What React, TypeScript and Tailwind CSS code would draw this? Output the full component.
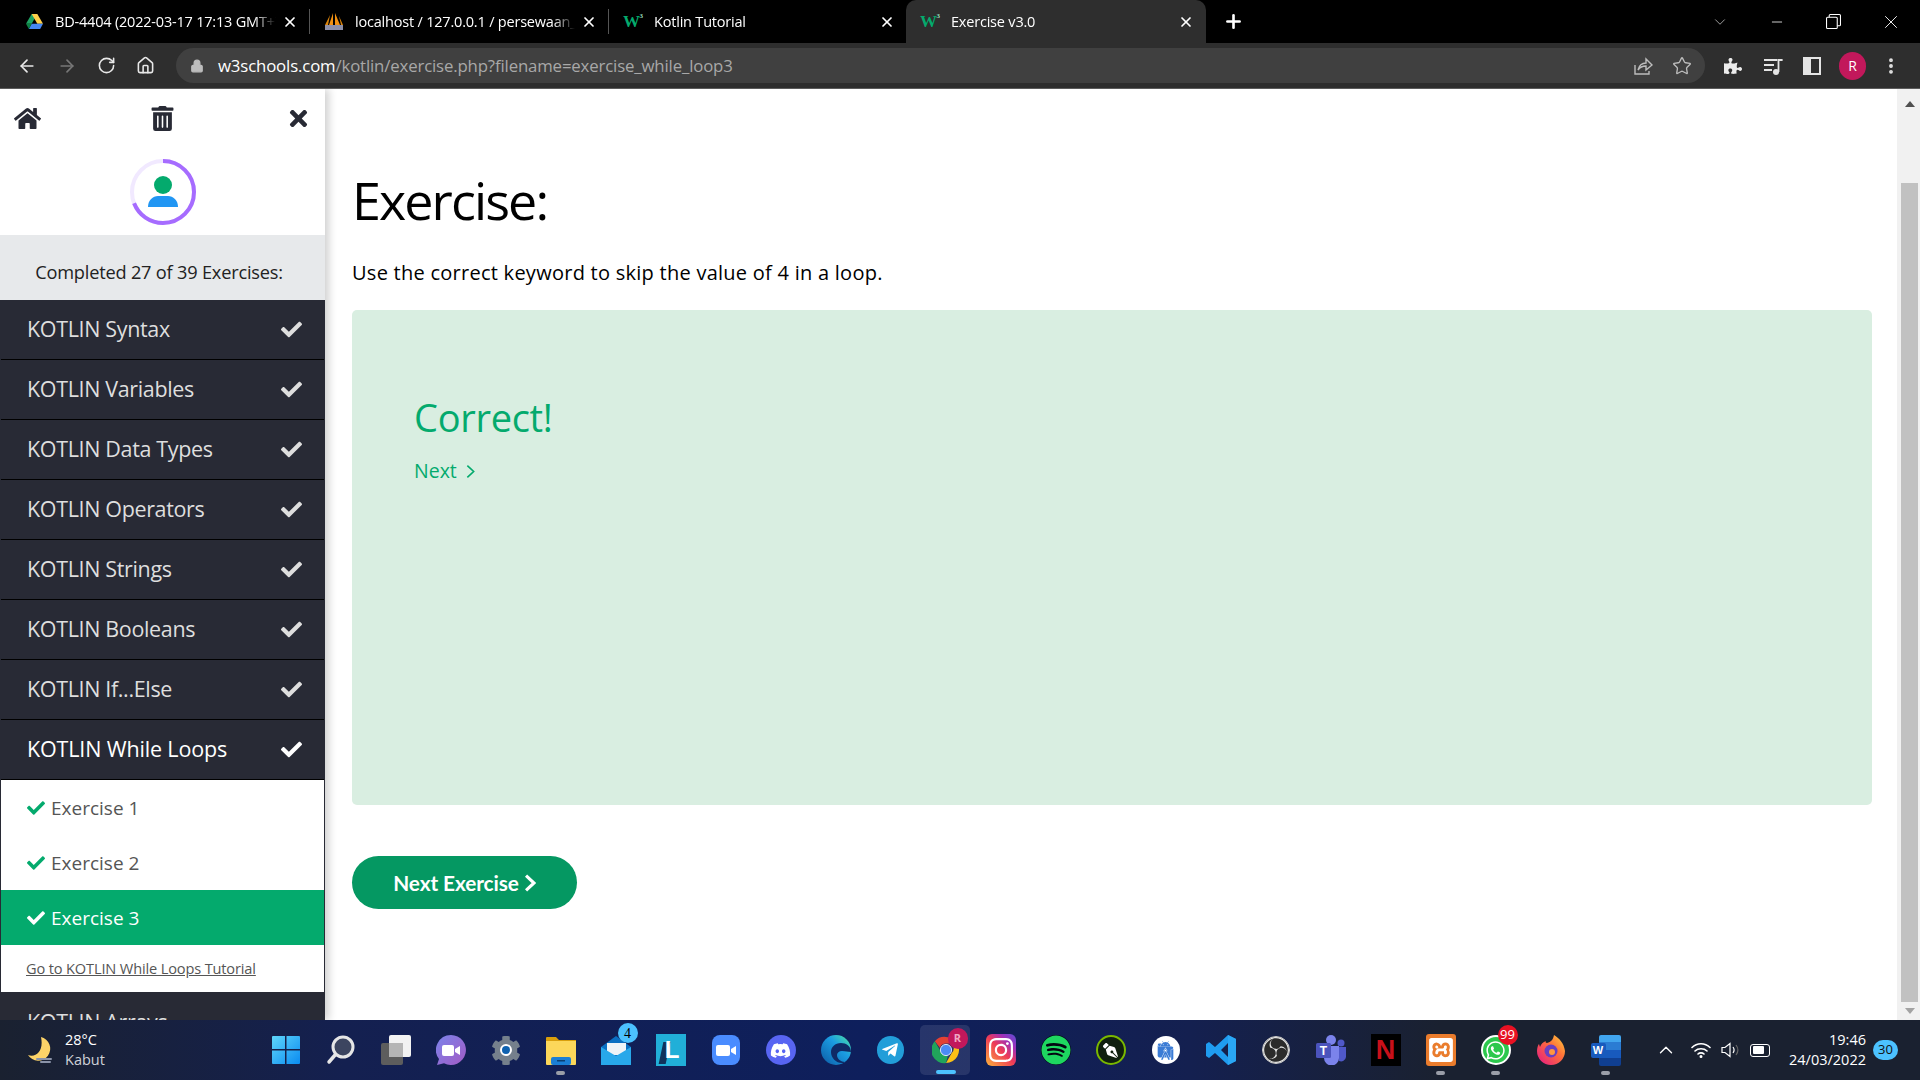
import { ArrowLeft, ArrowRight, ChevronDown, ChevronUp, Home, Lock, Minus, MoreVertical, Plus, RotateCw, Star, X } from "lucide-react";
import { FaCheck, FaCog, FaDiscord, FaHome, FaSpotify, FaTelegramPlane, FaTimes, FaTrashAlt, FaWhatsapp, FaPuzzlePiece, FaPenNib } from "react-icons/fa";
import { SiAndroidstudio, SiInstagram, SiObsstudio, SiXampp } from "react-icons/si";

const topics = ["KOTLIN Syntax", "KOTLIN Variables", "KOTLIN Data Types", "KOTLIN Operators", "KOTLIN Strings", "KOTLIN Booleans", "KOTLIN If...Else"];

function W3Icon() {
    return (
        <span className="relative w-[20px] h-5 flex items-center [font-family:'Liberation_Serif',serif] font-bold text-[17px] leading-none text-[#04aa6d]">
            W<span className="absolute right-0 top-[1px] text-[7px] text-[#9fe0c4]">3</span>
        </span>
    );
}

function Tab({ icon, title, width, active }: { icon: React.ReactNode; title: string; width: string; active?: boolean }) {
    return (
        <div className={`relative flex items-center h-full shrink-0 ${width} ${active ? "bg-[#2e2e2e] rounded-t-[10px] pl-[14px] pr-[12px]" : "pl-[14px] pr-[11px]"}`}>
            <div className="w-[20px] h-5 flex items-center justify-center shrink-0">{icon}</div>
            <div className={`flex-1 min-w-0 overflow-hidden whitespace-nowrap text-[14.5px] tracking-[-0.2px] text-white [mask-image:linear-gradient(to_left,transparent,black_22px)] ${active ? "ml-[11px]" : "ml-[11px]"}`}>{title}</div>
            <X size={16} strokeWidth={2.6} className="text-white shrink-0 ml-[6px]" />
        </div>
    );
}

function TabBar() {
    return (
        <div className="h-[43px] bg-black flex items-stretch shrink-0 pr-px">
            <div className="w-[10px]" />
            <Tab width="w-[299px]" title="BD-4404 (2022-03-17 17:13 GMT+7)" icon={
                <svg viewBox="0 0 20 18" className="w-[19px] h-[17px]">
                    <path d="M7 1h6l-6 10.5H1z" fill="#1fa463" />
                    <path d="M13 1l6 10.5h-6L7 1z" fill="#ffd04b" />
                    <path d="M4 17l3-5.5h12L16 17z" fill="#4688f4" />
                    <path d="M1 11.5h6L4 17z" fill="#0b8043" />
                </svg>
            } />
            <div className="w-px bg-[#555] my-[9px]" />
            <Tab width="w-[298px]" title="localhost / 127.0.0.1 / persewaan_mobil" icon={
                <svg viewBox="0 0 20 20" className="w-5 h-5">
                    <path d="M9 1L5 13h4zM11 1l5 12h-5z" fill="#f29111" />
                    <path d="M6 3L1 13h3zM15 4l4 9h-2z" fill="#d9830c" />
                    <rect x="1" y="13" width="18" height="5" fill="#8c8fa8" />
                </svg>
            } />
            <div className="w-px bg-[#555] my-[9px]" />
            <Tab width="w-[297px]" title="Kotlin Tutorial" icon={<W3Icon />} />
            <Tab active width="w-[300px]" title="Exercise v3.0" icon={<W3Icon />} />
            <div className="w-[55px] flex items-center justify-center">
                <Plus size={21} strokeWidth={3} className="text-white" />
            </div>
            <div className="flex-1" />
            <div className="w-[57px] flex items-center justify-center"><ChevronDown size={18} strokeWidth={1} className="text-[#ccc]" /></div>
            <div className="w-[57px] flex items-center justify-center"><Minus size={16} strokeWidth={1.2} className="text-white" /></div>
            <div className="w-[57px] flex items-center justify-center">
                <svg viewBox="0 0 14 14" className="w-[15px] h-[15px]" fill="none" stroke="white"><rect x="0.5" y="3" width="10" height="10.5" rx="1" /><path d="M3 3V1.5a1 1 0 0 1 1-1h8.5a1 1 0 0 1 1 1V10a1 1 0 0 1-1 1h-2" /></svg>
            </div>
            <div className="w-[57px] flex items-center justify-center"><X size={22} strokeWidth={1} className="text-white" /></div>
        </div>
    );
}

function Toolbar() {
    return (
        <div className="h-[46px] bg-[#2e2e2e] border-b border-[#5c5c5c] flex items-center shrink-0 text-white">
            <div className="w-[176px] pl-[17px] flex items-center gap-[20px] shrink-0">
                <ArrowLeft size={20} strokeWidth={2} className="text-[#e8e8e8]" />
                <ArrowRight size={20} strokeWidth={2} className="text-[#777]" />
                <RotateCw size={19} strokeWidth={2} className="text-[#e8e8e8]" />
                <Home size={19} strokeWidth={2} className="text-[#e8e8e8]" />
            </div>
            <div className="w-[1529px] h-[35px] rounded-full bg-[#404040] flex items-center shrink-0">
                <Lock size={14} fill="#bdbdbd" className="text-[#bdbdbd] ml-[14px]" />
                <div className="ml-[14px] text-[16.8px] tracking-[-0.15px] text-[#a8a8a8] whitespace-nowrap"><span className="text-white">w3schools.com</span>/kotlin/exercise.php?filename=exercise_while_loop3</div>
                <svg viewBox="0 0 20 20" className="w-5 h-5 ml-auto" fill="none" stroke="#bdbdbd" strokeWidth="1.4"><path d="M2 9v9h14v-3" /><path d="M5 14c1-4 4-7 8-7V3l6 6-6 5v-4c-3 0-6 1-8 4z" /></svg>
                <Star size={20} strokeWidth={1.6} className="text-[#bdbdbd] ml-[19px] mr-[13px]" />
            </div>
            <div className="flex-1 flex items-center pl-[19px]">
                <FaPuzzlePiece size={18} className="text-[#ececec]" />
                <svg viewBox="0 0 20 20" className="w-5 h-5 ml-[21px]" fill="#e4e4e4"><rect x="1" y="3" width="13" height="2" /><rect x="1" y="8" width="10" height="2" /><rect x="1" y="13" width="8" height="2" /><circle cx="13" cy="16" r="3" /><rect x="14.6" y="3" width="1.8" height="13" /><rect x="14.6" y="3" width="5" height="2" /></svg>
                <div className="w-[18px] h-[18px] bg-[#e4e4e4] ml-[20px] flex justify-end p-[2px] pl-[8px]"><div className="w-full h-full bg-[#2e2e2e]" /></div>
                <div className="w-[27px] h-[28px] rounded-full bg-[#c2185b] ml-[18px] flex items-center justify-center text-[14px] text-white">R</div>
                <MoreVertical size={20} strokeWidth={2.6} className="text-[#e4e4e4] ml-[15px]" />
            </div>
        </div>
    );
}

function Sidebar() {
    return (
        <div className="w-[325px] h-full shrink-0 bg-white flex flex-col overflow-hidden shadow-[4px_0_8px_rgba(0,0,0,0.18)] z-10">
            <div className="h-[58px] flex items-center justify-between pl-[14px] pr-[15px] shrink-0 text-[#282a35]">
                <FaHome size={27} />
                <FaTrashAlt size={25} className="-ml-px" />
                <FaTimes size={25} className="translate-x-px" />
            </div>
            <div className="h-[88px] pt-[11px] flex items-start justify-center shrink-0">
                <svg viewBox="0 0 68 68" className="w-[68px] h-[68px]">
                    <circle cx="34" cy="34" r="31" fill="none" stroke="#f1e9ff" strokeWidth="4" />
                    <circle cx="34" cy="34" r="31" fill="none" stroke="#a66cff" strokeWidth="4" strokeDasharray="134.4 194.8" transform="rotate(-90 34 34)" />
                    <circle cx="34" cy="27" r="9" fill="#04aa6d" />
                    <path d="M19 49c0-7 5-11 10-11h10c5 0 10 4 10 11z" fill="#2196f3" />
                </svg>
            </div>
            <div className="h-[65px] bg-[#e7e9eb] flex items-center justify-center text-[18.2px] tracking-[-0.2px] text-[#222] pt-[10px] pr-[7px] shrink-0">Completed 27 of 39 Exercises:</div>
            <div className="bg-[#282a35] flex-1 flex flex-col">
                {topics.map((t) => (
                    <div key={t} className="h-[60px] shrink-0 border-b border-black mx-px flex items-center justify-between pl-[26px] pr-[22px] text-[21.5px] tracking-[-0.35px] text-[#dedede]">
                        {t}
                        <FaCheck size={21} />
                    </div>
                ))}
                <div className="h-[60px] shrink-0 border-b border-black mx-px flex items-center justify-between pl-[26px] pr-[22px] text-[21.5px] tracking-[-0.15px] text-white">
                    KOTLIN While Loops
                    <FaCheck size={21} />
                </div>
                <div className="bg-white mx-px shrink-0 text-[#555] text-[19px]">
                    <div className="h-[55px] flex items-center pl-[26px] pt-px gap-[6px]"><FaCheck size={18} className="text-[#04aa6d]" />Exercise 1</div>
                    <div className="h-[55px] flex items-center pl-[26px] pt-px gap-[6px]"><FaCheck size={18} className="text-[#04aa6d]" />Exercise 2</div>
                    <div className="h-[55px] flex items-center pl-[26px] pt-px gap-[6px] bg-[#04aa6d] text-white"><FaCheck size={18} />Exercise 3</div>
                    <div className="h-[47px] flex items-center pl-[25px] text-[14.6px] tracking-[-0.15px] underline">Go to KOTLIN While Loops Tutorial</div>
                </div>
                <div className="h-[60px] shrink-0 mx-px flex items-center pl-[26px] text-[21.5px] tracking-[-0.35px] text-[#dedede]">KOTLIN Arrays</div>
            </div>
        </div>
    );
}

function Main() {
    return (
        <div className="flex-1 min-w-0 pl-[27px] pr-[25px] bg-white flex flex-col">
            <h1 className="text-[52px] leading-[70px] tracking-[-1.9px] text-black mt-[76px]">Exercise:</h1>
            <p className="text-[20px] leading-[30px] tracking-[0.26px] text-black mt-[23px]">Use the correct keyword to skip the value of 4 in a loop.</p>
            <div className="h-[495px] mt-[22px] rounded-[5px] bg-[#d9eee1] pl-[62px] pt-[83px] text-[#04aa6d] shrink-0">
                <div className="text-[38px] leading-[48px] tracking-[-0.3px]">Correct!</div>
                <div className="text-[19.5px] leading-[30px] mt-[15px] flex items-center">Next
                    <svg viewBox="0 0 10 16" className="w-[9px] h-[15px] ml-[9px]" fill="none" stroke="#04aa6d" strokeWidth="1.8"><path d="M1.5 1.5 8.5 8l-7 6.5" /></svg>
                </div>
            </div>
            <div className="w-[225px] h-[53px] mt-[51px] rounded-full bg-[#059862] flex items-center justify-center text-white text-[20.8px] font-bold [font-family:Lato,sans-serif] tracking-[-0.1px]">Next Exercise
                <svg viewBox="0 0 10 16" className="w-[12px] h-[18px] ml-[5px]" fill="none" stroke="white" strokeWidth="2.8"><path d="M1.5 1.5 8.5 8l-7 6.5" /></svg>
            </div>
        </div>
    );
}

function Scrollbar() {
    return (
        <div className="w-[23px] h-full shrink-0 bg-[#f1f1f1] flex flex-col items-center">
            <svg viewBox="0 0 10 6" className="w-[10px] h-[6px] mt-[12px] ml-[2px] shrink-0" fill="#505050"><path d="M5 0l5 6H0z" /></svg>
            <div className="w-[17px] ml-[2px] mt-[76px] flex-1 bg-[#c1c1c1]" />
            <svg viewBox="0 0 10 6" className="w-[10px] h-[6px] mt-[6px] mb-[6px] ml-[2px] shrink-0" fill="#a3a3a3"><path d="M5 6l5-6H0z" /></svg>
        </div>
    );
}

function TaskIcon({ children, dot, active }: { children: React.ReactNode; dot?: boolean; active?: boolean }) {
    return (
        <div className="relative w-[55px] h-[60px] shrink-0 flex items-center justify-center">
            {active && <div className="absolute left-[2px] right-[3px] top-[5px] bottom-[5px] rounded-[5px] bg-white/10" />}
            <div className="relative w-[30px] h-[30px] flex items-center justify-center">{children}</div>
            {dot && <div className="absolute left-[23px] bottom-[5px] w-[9px] h-[4px] rounded-full bg-[#9a9ea8]" />}
            {active && <div className="absolute left-[18px] bottom-[6px] w-[20px] h-[4px] rounded-full bg-[#4cc2ff]" />}
        </div>
    );
}

function Badge({ text, className }: { text: string; className: string }) {
    return <div className={`absolute flex items-center justify-center rounded-full ${className}`}>{text}</div>;
}

function TaskIcons() {
    return (
        <>
            <TaskIcon>
                <svg viewBox="0 0 30 30" className="w-[30px] h-[30px]">
                    <defs><linearGradient id="win" x1="0" y1="0" x2="1" y2="1"><stop offset="0" stopColor="#5fd6fb" /><stop offset="1" stopColor="#0a8bf0" /></linearGradient></defs>
                    <path d="M1 2a1 1 0 0 1 1-1h12v13H1zM15.500 1H28a1 1 0 0 1 1 1v12H15.500zM1 15.500h13V29H2a1 1 0 0 1-1-1zM15.500 15.500H29V28a1 1 0 0 1-1 1H15.500z" fill="url(#win)" />
                </svg>
            </TaskIcon>
            <TaskIcon>
                <svg viewBox="0 0 30 30" className="w-[30px] h-[30px]"><circle cx="17" cy="12" r="10" fill="#3c4560" stroke="#e6e6e6" strokeWidth="3" /><path d="M9.500 19.500 3 27" stroke="#e6e6e6" strokeWidth="3.500" strokeLinecap="round" /></svg>
            </TaskIcon>
            <TaskIcon>
                <svg viewBox="0 0 30 30" className="w-[30px] h-[30px]"><rect x="0" y="8" width="22" height="22" rx="2" fill="#5d5d5d" /><rect x="8" y="0" width="22" height="22" rx="2" fill="#f2f2f2" /><rect x="8" y="8" width="14" height="14" fill="#b5b5b5" /></svg>
            </TaskIcon>
            <TaskIcon>
                <svg viewBox="0 0 30 30" className="w-[30px] h-[30px]">
                    <defs><linearGradient id="meet" x1="0" y1="0" x2="1" y2="1"><stop offset="0" stopColor="#7b83eb" /><stop offset="1" stopColor="#a35bc4" /></linearGradient></defs>
                    <path d="M15 0a15 15 0 1 1-7 28.300L1 30l2-6A15 15 0 0 1 15 0z" fill="url(#meet)" />
                    <rect x="6" y="10" width="12" height="11" rx="2" fill="white" /><path d="M19 14l5-3v9l-5-3z" fill="white" />
                </svg>
            </TaskIcon>
            <TaskIcon>
                <FaCog size={31} className="text-[#75808c]" />
                <div className="absolute left-[9px] top-[9px] w-[12px] h-[12px] rounded-full bg-[#0f62b0] border-2 border-white" />
            </TaskIcon>
            <TaskIcon dot>
                <svg viewBox="0 0 30 30" className="w-[30px] h-[30px]"><path d="M0 3a1 1 0 0 1 1-1h9l3 3h17v4H0z" fill="#d99f0c" /><path d="M0 6h30v23a1 1 0 0 1-1 1H1a1 1 0 0 1-1-1z" fill="#fcd75a" /><rect x="5" y="22" width="20" height="8" rx="2" fill="#1b7fd4" /><rect x="11" y="25" width="8" height="1.500" fill="#0b3f70" /></svg>
            </TaskIcon>
            <TaskIcon>
                <svg viewBox="0 0 30 30" className="w-[30px] h-[30px]"><path d="M0 12 15 1l15 11v17H0z" fill="#0a6fc2" /><path d="M6 8h19v12H6z" fill="#eef3f7" /><path d="M0 12l15 9 15-9v18H0z" fill="#28a8ea" /></svg>
                <Badge text="4" className="-right-[7px] -top-[12px] w-[20px] h-[20px] bg-[#4cc2ff] text-black text-[14px] [font-family:'Liberation_Serif',serif]" />
            </TaskIcon>
            <TaskIcon>
                <div className="w-[30px] h-[32px] bg-[#21afd8] relative overflow-hidden flex items-center justify-center pl-[3px] text-white text-[24px] font-bold [font-family:'Liberation_Sans',sans-serif]">
                    <div className="absolute left-[5px] top-[8px] w-[7px] h-[22px] bg-[#10325a] skew-x-[-12deg]" />
                    <span className="relative">L</span>
                </div>
            </TaskIcon>
            <TaskIcon>
                <div className="w-[28px] h-[30px] rounded-[8px] bg-[#4a8cff] flex items-center justify-center gap-[1px]"><div className="w-[14px] h-[11px] rounded-[2px] bg-white" /><svg viewBox="0 0 5 9" className="w-[5px] h-[9px]" fill="white"><path d="M0 3l5-3v9L0 6z" /></svg></div>
            </TaskIcon>
            <TaskIcon>
                <div className="w-[30px] h-[30px] rounded-full bg-[#5865f2] flex items-center justify-center"><FaDiscord size={21} className="text-white" /></div>
            </TaskIcon>
            <TaskIcon>
                <svg viewBox="0 0 30 30" className="w-[32px] h-[32px]">
                    <defs><linearGradient id="edge" x1="0" y1="1" x2="1" y2="0"><stop offset="0" stopColor="#0c59a4" /><stop offset="0.6" stopColor="#1b9de2" /><stop offset="1" stopColor="#50e6a0" /></linearGradient></defs>
                    <circle cx="15" cy="15" r="15" fill="url(#edge)" />
                    <path d="M30 17c0-6-5-9-10-9-6 0-10 4-10 9 0 6 5 11 11 11 1 0 2 0 3-1-4 0-8-3-8-7 0-2 2-4 5-4 4 0 5 1 9 1z" fill="#0f2a66" />
                </svg>
            </TaskIcon>
            <TaskIcon>
                <div className="w-[27px] h-[28px] rounded-full bg-[#229ed9] flex items-center justify-center pr-[2px]"><FaTelegramPlane size={18} className="text-white" /></div>
            </TaskIcon>
            <TaskIcon active>
                <svg viewBox="0 0 30 30" className="w-[28px] h-[28px]">
                    <path d="M15 1a14 14 0 0 1 12.100 7H15a7 7 0 0 0-6.500 4.500L3 5.500A14 14 0 0 1 15 1z" fill="#e34133" />
                    <path d="M27.100 8A14 14 0 0 1 15 29l6-10.500A7 7 0 0 0 21 8z" fill="#fbc116" />
                    <path d="M15 29A14 14 0 0 1 3 5.500l6 10.500a7 7 0 0 0 8 5z" fill="#21a55b" />
                    <circle cx="15" cy="15" r="6" fill="#4c8bf5" stroke="#e8eef8" strokeWidth="1" />
                </svg>
                <Badge text="R" className="-right-[7px] -top-[7px] w-[20px] h-[21px] bg-[#c2185b] text-[#f0a8c4] text-[11px] font-bold" />
            </TaskIcon>
            <TaskIcon>
                <div className="w-[30px] h-[32px] rounded-[6px] bg-[linear-gradient(45deg,#fdb33a,#ee3a57_50%,#a030b8,#5b50d8)] flex items-center justify-center"><SiInstagram size={24} className="text-white" /></div>
            </TaskIcon>
            <TaskIcon><FaSpotify size={30} className="text-[#1ed760] bg-black/80 rounded-full" /></TaskIcon>
            <TaskIcon>
                <div className="w-[30px] h-[30px] rounded-full bg-[#10200f] border-[2.5px] border-[#7ab800] flex items-center justify-center"><FaPenNib size={15} className="text-white -scale-x-100" /></div>
            </TaskIcon>
            <TaskIcon>
                <div className="w-[28px] h-[28px] rounded-full bg-white flex items-center justify-center"><SiAndroidstudio size={19} className="text-[#3a7bd5]" /></div>
            </TaskIcon>
            <TaskIcon>
                <svg viewBox="0 0 30 32" className="w-[30px] h-[32px]">
                    <path d="M22 1l8 4v22l-8 4-13-12-6 5-3-2v-12l3-2 6 5zM22 9l-7 7 7 7z" fill="#1f9cf0" />
                    <path d="M22 1l8 4v22l-8 4z" fill="#2aa7f5" />
                </svg>
            </TaskIcon>
            <TaskIcon>
                <div className="w-[28px] h-[28px] rounded-full bg-[#2b2b2b] border border-[#d0d0d0] flex items-center justify-center"><SiObsstudio size={26} className="text-[#e4e4e4]" /></div>
            </TaskIcon>
            <TaskIcon>
                <svg viewBox="0 0 30 30" className="w-[30px] h-[30px]">
                    <circle cx="15" cy="5" r="5" fill="#7b83eb" /><circle cx="25" cy="8" r="3.500" fill="#5059c9" />
                    <path d="M21 12h9v10a5 5 0 0 1-7 4z" fill="#5059c9" /><path d="M8 11h15v12a7 7 0 0 1-15 0z" fill="#7b83eb" />
                    <rect x="0" y="8" width="15" height="15" rx="1.500" fill="#4b53bc" />
                    <text x="7.500" y="20" textAnchor="middle" fontSize="12" fontWeight="bold" fill="white" fontFamily="Liberation Sans">T</text>
                </svg>
            </TaskIcon>
            <TaskIcon>
                <div className="w-[30px] h-[32px] bg-black flex items-center justify-center [font-family:'Liberation_Sans',sans-serif] font-bold text-[27px] text-[#c8101a]">N</div>
            </TaskIcon>
            <TaskIcon dot>
                <div className="w-[30px] h-[32px] rounded-[3px] bg-[#ea7c2c] flex items-center justify-center"><SiXampp size={24} className="text-white" /></div>
            </TaskIcon>
            <TaskIcon dot>
                <div className="w-[30px] h-[30px] rounded-full bg-[#2cc84d] flex items-center justify-center border-2 border-white"><FaWhatsapp size={21} className="text-white" /></div>
                <Badge text="99" className="-right-[7px] -top-[10px] w-[20px] h-[20px] bg-[#e81123] text-white text-[13px]" />
            </TaskIcon>
            <TaskIcon>
                <svg viewBox="0 0 30 32" className="w-[30px] h-[32px]">
                    <defs><linearGradient id="ff" x1="0" y1="1" x2="1" y2="0"><stop offset="0" stopColor="#e31587" /><stop offset="0.6" stopColor="#ff7139" /><stop offset="1" stopColor="#ffd43b" /></linearGradient></defs>
                    <path d="M15 31A14 14 0 0 1 1 17c0-3 1-6 2-7l1 3c1-3 3-5 6-6-1 1 0 2 1 2 4-1 6-3 7-8 5 3 10 8 11 16a14 14 0 0 1-14 14z" fill="url(#ff)" />
                    <circle cx="15" cy="17" r="6.500" fill="#6a3fc0" /><circle cx="16" cy="18" r="3" fill="#ff9640" />
                </svg>
            </TaskIcon>
            <TaskIcon dot>
                <div className="relative w-[30px] h-[31px]">
                    <div className="absolute right-0 top-0 w-[22px] h-[31px] rounded-[2px] overflow-hidden flex flex-col">
                        <div className="flex-1 bg-[#41a5ee]" /><div className="flex-1 bg-[#2b7cd3]" /><div className="flex-1 bg-[#185abd]" /><div className="flex-1 bg-[#103f91]" />
                    </div>
                    <div className="absolute left-0 top-[8px] w-[15px] h-[15px] rounded-[2px] bg-[#185abd] text-white text-[11px] font-bold flex items-center justify-center [font-family:'Liberation_Sans',sans-serif]">W</div>
                </div>
            </TaskIcon>
        </>
    );
}

function Taskbar() {
    return (
        <div className="h-[60px] shrink-0 flex items-center text-white bg-[linear-gradient(90deg,#1a2130_0%,#142050_18%,#0e1f5c_45%,#142050_62%,#1a2130_75%,#1a2130_100%)]">
            <div className="w-[258px] shrink-0 flex items-center pl-[25px]">
                <svg viewBox="0 0 28 30" className="w-[28px] h-[30px] shrink-0"><path d="M16 2a12 12 0 1 1-13 18c8 3 16-4 13-18z" fill="#fcd368" /><path d="M12 24h14M16 27h9" stroke="#8a93a8" strokeWidth="2" strokeLinecap="round" /></svg>
                <div className="ml-[12px] text-[14.5px] leading-[20px]">
                    <div>28°C</div>
                    <div className="text-[#cfd2d8]">Kabut</div>
                </div>
            </div>
            <TaskIcons />
            <div className="flex-1 flex items-center justify-end">
                <ChevronUp size={22} strokeWidth={1.5} />
                <svg viewBox="0 0 20 16" className="w-5 h-4 ml-[14px]" fill="none" stroke="white" strokeWidth="1.6" strokeLinecap="round"><path d="M1 5.500c5-5 13-5 18 0M4 9c3-3 9-3 12 0M7 12c1.500-1.500 4.500-1.500 6 0" /><circle cx="10" cy="14.500" r="0.700" fill="white" /></svg>
                <svg viewBox="0 0 20 16" className="w-5 h-4 ml-[10px]" fill="none" stroke="white" strokeWidth="1.2"><path d="M1 5.500h3L9 1.500v13L4 10.500H1z" /><path d="M12 5c1.300 1.800 1.300 4.200 0 6" /><path d="M15 3c2.300 3 2.300 7 0 10" stroke="#666" /></svg>
                <div className="ml-[9px] w-[20px] h-[13px] rounded-[3px] border-[1.5px] border-white p-[1.5px] mr-[3px]"><div className="w-[11px] h-full bg-white rounded-[1px]" /></div>
                <div className="ml-[16px] text-right text-[14.5px] leading-[20px]">
                    <div>19:46</div>
                    <div>24/03/2022</div>
                </div>
                <div className="w-[25px] h-[20px] rounded-full bg-[#4cc2ff] text-[#111] text-[13px] flex items-center justify-center ml-[7px] mr-[22px]">30</div>
            </div>
        </div>
    );
}

export default function App() {
    return (
        <div className="w-[1920px] h-[1080px] flex flex-col overflow-hidden bg-white [font-family:'Open_Sans',sans-serif]">
            <TabBar />
            <Toolbar />
            <div className="flex-1 min-h-0 flex overflow-hidden">
                <Sidebar />
                <Main />
                <Scrollbar />
            </div>
            <Taskbar />
        </div>
    );
}
